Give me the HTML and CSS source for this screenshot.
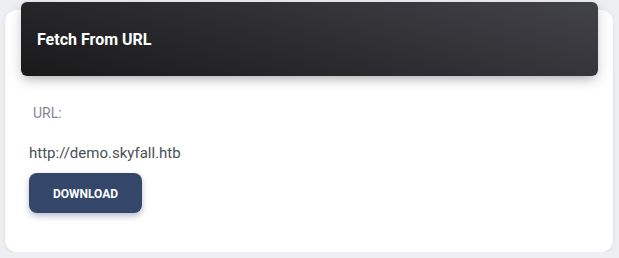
FILE: index.html
```html
<!DOCTYPE html>
<html lang="en">
<head>
<meta charset="UTF-8">
<title>Fetch From URL</title>
<link rel="stylesheet" href="styles.css">
</head>
<body>
  <div class="card">
    <div class="card-header">
      <h4 class="card-title">Fetch From URL</h4>
    </div>
    <div class="card-body">
      <label class="url-label">URL:</label>
      <p class="url-value">http://demo.skyfall.htb</p>
      <button class="btn-download">Download</button>
    </div>
  </div>
</body>
</html>
```

FILE: styles.css
```css
body {
    margin: 0;
    background-color: #eeeff3;
    font-family: Roboto, "Liberation Sans", sans-serif;
}

.card {
    margin: 10px 6px 0 5px;
    height: 242px;
    background-color: #fff;
    border-radius: 12px;
    box-shadow: 0 1px 4px rgba(0, 0, 0, 0.08);
}

.card-header {
    position: relative;
    top: -8px;
    margin: 0 15px 0 16px;
    height: 74px;
    display: flex;
    align-items: center;
    padding: 0 16px;
    border-radius: 6px;
    background: linear-gradient(195deg, #424249, #19191a);
    box-shadow: 0 4px 14px rgba(0, 0, 0, 0.16), 0 6px 10px -5px rgba(64, 64, 64, 0.3);
}

.card-title {
    margin: 0;
    color: #fff;
    font-size: 16px;
    font-weight: 700;
}

.card-body {
    padding: 21px 24px 0 24px;
}

.url-label {
    display: block;
    margin-left: 4px;
    color: #858893;
    font-size: 14px;
    font-weight: 400;
}

.url-value {
    margin: 23px 0 11px 0;
    color: #495057;
    font-size: 15px;
}

.btn-download {
    width: 113px;
    height: 40px;
    padding-top: 3px;
    border: none;
    border-radius: 8px;
    background-color: #34466a;
    color: #fff;
    font-family: Roboto, "Liberation Sans", sans-serif;
    font-size: 12px;
    font-weight: 700;
    text-transform: uppercase;
    box-shadow: 0 3px 6px rgba(52, 70, 106, 0.35);
}
```
